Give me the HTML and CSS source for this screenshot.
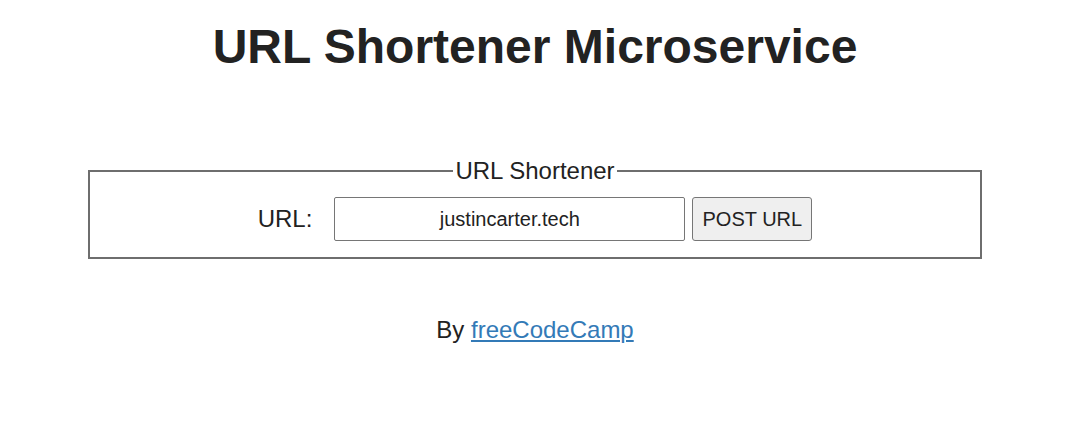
FILE: index.html
```html
<!DOCTYPE html>
<html>
<head>
<meta charset="utf-8">
<link rel="stylesheet" href="styles.css">
</head>
<body>
<main class="page">
  <h1 class="title">URL Shortener Microservice</h1>
  <form class="form">
    <fieldset class="box">
      <legend class="legend">URL Shortener</legend>
      <div class="row">
        <label class="label" for="url">URL:</label>
        <input class="input" id="url" type="text" value="justincarter.tech">
        <button class="btn" type="button">POST URL</button>
      </div>
    </fieldset>
  </form>
  <p class="footer">By <a class="link" href="#">freeCodeCamp</a></p>
</main>
</body>
</html>
```

FILE: styles.css
```css
html, body {
  margin: 0;
  padding: 0;
  background: #fff;
}
.page {
  font-family: "Liberation Sans", Arial, sans-serif;
  color: #222;
  padding: 0 0 0 5px;
  text-align: center;
}
.title {
  margin: 0;
  padding-top: 19px;
  font-size: 48px;
  font-weight: bold;
  line-height: 56px;
  color: #222;
}
.form {
  margin: 0;
  padding-top: 82px;
  display: flex;
  justify-content: center;
}
.box {
  width: 894px;
  margin: 0;
  padding: 12px 0 16px 0;
  border: 2px solid #6e6e6e;
  box-sizing: border-box;
}
.legend {
  font-size: 24px;
  padding: 0 2px;
  color: #222;
  line-height: 28px;
}
.row {
  display: flex;
  justify-content: center;
  align-items: center;
}
.label {
  font-size: 24px;
  margin-right: 22px;
}
.input {
  width: 351px;
  height: 44px;
  box-sizing: border-box;
  border: 1px solid #767676;
  border-radius: 2px;
  font-family: "Liberation Sans", Arial, sans-serif;
  font-size: 20px;
  text-align: center;
  color: #222;
  padding: 0 8px;
  margin: 0 7px 0 0;
}
.btn {
  height: 44px;
  width: 120px;
  box-sizing: border-box;
  font-family: "Liberation Sans", Arial, sans-serif;
  font-size: 20px;
  color: #222;
  background: #efefef;
  border: 1px solid #767676;
  border-radius: 3px;
  padding: 0;
  margin: 0;
}
.footer {
  margin: 0;
  padding-top: 57px;
  font-size: 24px;
  line-height: 28px;
}
.link {
  color: #337ab7;
}
```
